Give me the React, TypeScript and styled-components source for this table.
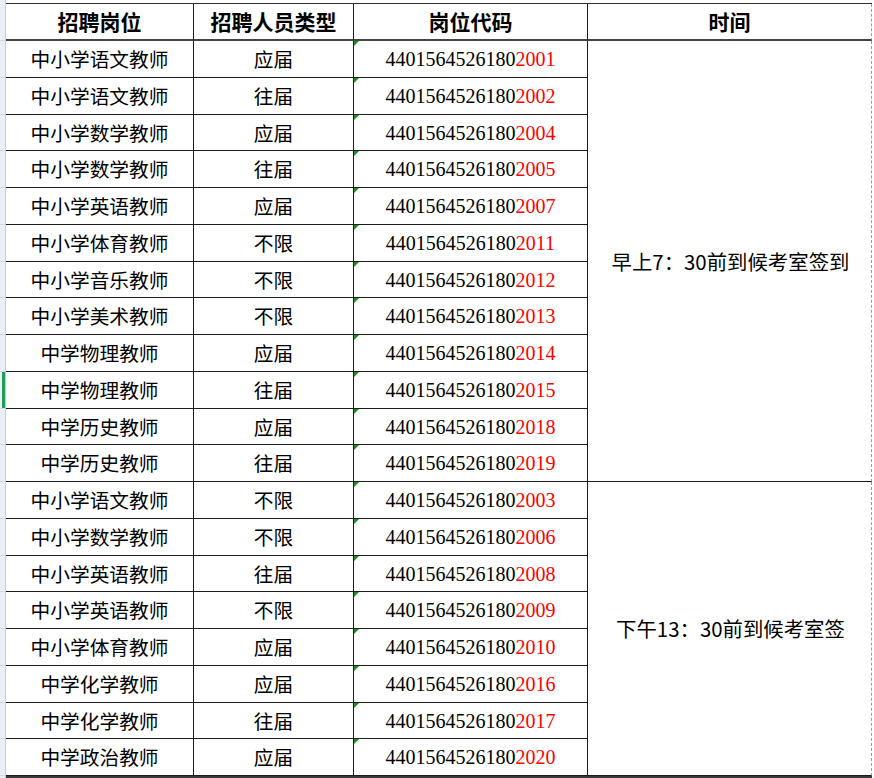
import styled, { createGlobalStyle } from "styled-components";

const GlobalStyle = createGlobalStyle`
  html, body {
    margin: 0;
    padding: 0;
    background: #ffffff;
  }
  body {
    font-family: "Noto Sans CJK SC", "Noto Sans", sans-serif;
    color: #000;
  }
`;

type Row = { post: string; kind: string; code: string };

const PREFIX = "4401564526180";

const rows: Row[] = [
  { post: "中小学语文教师", kind: "应届", code: "2001" },
  { post: "中小学语文教师", kind: "往届", code: "2002" },
  { post: "中小学数学教师", kind: "应届", code: "2004" },
  { post: "中小学数学教师", kind: "往届", code: "2005" },
  { post: "中小学英语教师", kind: "应届", code: "2007" },
  { post: "中小学体育教师", kind: "不限", code: "2011" },
  { post: "中小学音乐教师", kind: "不限", code: "2012" },
  { post: "中小学美术教师", kind: "不限", code: "2013" },
  { post: "中学物理教师", kind: "应届", code: "2014" },
  { post: "中学物理教师", kind: "往届", code: "2015" },
  { post: "中学历史教师", kind: "应届", code: "2018" },
  { post: "中学历史教师", kind: "往届", code: "2019" },
  { post: "中小学语文教师", kind: "不限", code: "2003" },
  { post: "中小学数学教师", kind: "不限", code: "2006" },
  { post: "中小学英语教师", kind: "往届", code: "2008" },
  { post: "中小学英语教师", kind: "不限", code: "2009" },
  { post: "中小学体育教师", kind: "应届", code: "2010" },
  { post: "中学化学教师", kind: "应届", code: "2016" },
  { post: "中学化学教师", kind: "往届", code: "2017" },
  { post: "中学政治教师", kind: "应届", code: "2020" },
];

// row heights: spreadsheet rows are 36.75px, snapped to whole pixels
const HEADER_H = 37;
const rowHeights = rows.map((_, i) => {
  const a = Math.round(40 + 36.75 * i);
  const b = Math.round(40 + 36.75 * (i + 1));
  return b - a;
});

const Page = styled.div`
  display: flex;
  align-items: flex-start;
`;

const Gutter = styled.div`
  display: flex;
  flex-direction: column;
  width: 5px;
  border-right: 1px solid #c6ccd6;
  background: #eaeef5;
  padding-top: 3px;
  min-height: 778px;
`;

const GutterCell = styled.div<{ $h: number; $active?: boolean }>`
  height: ${({ $h }) => `${$h}px`};
  box-sizing: border-box;
  border-bottom: 1px solid #d2d7e0;
  box-shadow: ${({ $active }) => ($active ? "inset -3px 0 0 #1e9e5a" : "none")};
`;

const Sheet = styled.div<{ $rows: string }>`
  display: grid;
  grid-template-columns: 188px 160px 234px 284px;
  grid-template-rows: ${({ $rows }) => $rows};
  margin-top: 3px;
  border-top: 1px solid #2e2e2e;
  border-bottom: 2px solid #3a3a3a;
`;

const Cell = styled.div<{ $span?: number; $last?: boolean }>`
  box-sizing: border-box;
  display: flex;
  align-items: center;
  justify-content: center;
  border-bottom: 1px solid #1c1c1c;
  border-right: ${({ $last }) => ($last ? "1px dashed #9c9c9c" : "1px solid #1c1c1c")};
  font-size: 19.7px;
  line-height: 1;
  white-space: nowrap;
  grid-row: ${({ $span }) => ($span ? `span ${$span}` : "auto")};
`;

const HeadCell = styled(Cell)`
  font-weight: 700;
  font-size: 21px;
  border-bottom: 2px solid #444;
`;

const CodeCell = styled(Cell)`
  position: relative;
  font-family: "Liberation Serif", "Times New Roman", serif;
  font-size: 20px;

  &::before {
    content: "";
    position: absolute;
    top: 0;
    left: 0;
    border-top: 5px solid #1f8f1f;
    border-right: 5px solid transparent;
  }
`;

const Red = styled.span`
  color: #ff0000;
`;

const TimeCell = styled(Cell)`
  font-size: 20.4px;
  padding-left: 2px;
`;

export default function App() {
  const template = [HEADER_H, ...rowHeights].map((h) => `${h}px`).join(" ");

  return (
    <>
      <GlobalStyle />
      <Page>
        <Gutter>
          <GutterCell $h={HEADER_H + 1} />
          {rowHeights.map((h, i) => (
            <GutterCell key={i} $h={h} $active={i === 9} />
          ))}
        </Gutter>
        <Sheet $rows={template}>
          <HeadCell>招聘岗位</HeadCell>
          <HeadCell>招聘人员类型</HeadCell>
          <HeadCell>岗位代码</HeadCell>
          <HeadCell $last>时间</HeadCell>
          {rows.map((r, i) => (
            <RowCells key={i} row={r} index={i} />
          ))}
        </Sheet>
      </Page>
    </>
  );
}

function RowCells({ row, index }: { row: Row; index: number }) {
  return (
    <>
      <Cell>{row.post}</Cell>
      <Cell>{row.kind}</Cell>
      <CodeCell>
        {PREFIX}
        <Red>{row.code}</Red>
      </CodeCell>
      {index === 0 && (
        <TimeCell $span={12} $last>
          早上7：30前到候考室签到
        </TimeCell>
      )}
      {index === 12 && (
        <TimeCell $span={8} $last>
          下午13：30前到候考室签
        </TimeCell>
      )}
    </>
  );
}
